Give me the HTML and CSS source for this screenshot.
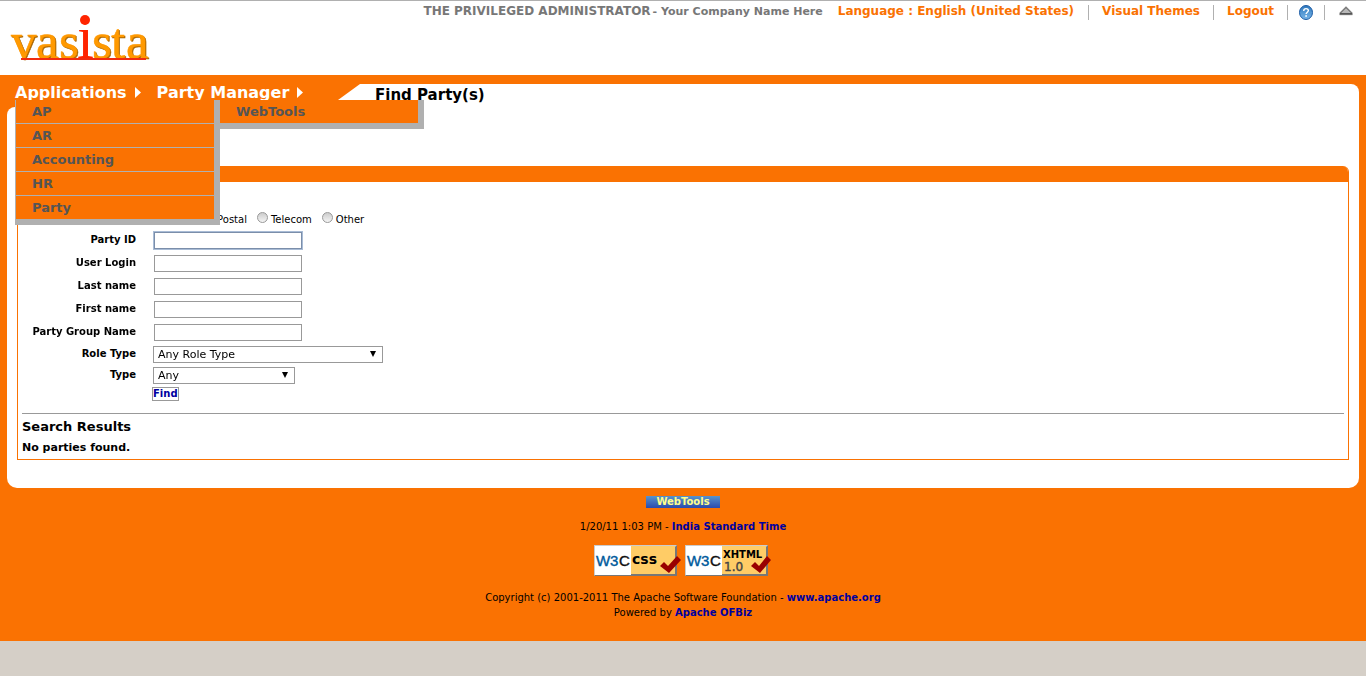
FILE: index.html
```html
<!DOCTYPE html>
<html lang="en">
<head>
<meta charset="utf-8">
<title>Find Party(s)</title>
<link rel="stylesheet" href="styles.css">
</head>
<body>
<header class="header">
  <a class="logo" href="#" aria-label="vasista">
    <svg width="146" height="68" viewBox="0 -12 146 68">
      <g class="logo-face"><text x="1" y="45">v</text><text x="26" y="45">a</text><text x="49" y="45">s</text><text x="82" y="45">s</text><text x="101" y="45">t</text><text x="116" y="45">a</text></g>
      <text class="logo-i" x="67" y="45">i</text>
      <circle cx="75" cy="7" r="5" fill="#ff2400"/>
      <rect x="11" y="45" width="125" height="2" fill="#f02c10"/>
    </svg>
  </a>
  <ul class="prefs">
    <li class="user"><span class="user-name">THE PRIVILEGED ADMINISTRATOR</span><span class="company">- Your Company Name Here</span></li>
    <li class="language"><a href="#">Language : English (United States)</a></li>
    <li><a href="#">Visual Themes</a></li>
    <li><a href="#">Logout</a></li>
    <li class="tool"><a href="#" aria-label="Help"><svg width="14" height="15" viewBox="0 0 14 15">
      <defs><linearGradient id="help" x2="0" y2="1"><stop offset="0" stop-color="#2f78bd"/><stop offset="1" stop-color="#79b6e8"/></linearGradient></defs>
      <ellipse cx="7" cy="7.5" rx="6.5" ry="7" fill="url(#help)" stroke="#1d5ca5"/>
      <path d="M4.7 5.9C4.7 2.9 9.4 2.9 9.4 5.6C9.4 7.2 7.1 7.3 7.1 9.1" fill="none" stroke="#fff" stroke-width="1.4"/><rect x="6.3" y="10.2" width="1.6" height="1.6" fill="#fff"/></svg></a></li>
    <li class="collapse"><a href="#" aria-label="Collapse header"><svg width="14" height="15" viewBox="0 0 14 15">
      <path d="M7 1.5L13.5 8V10H.5V8Z" fill="#555" stroke="#bbb" stroke-width=".6"/><path d="M7 2.9L12 8H2Z" fill="#b8b8b8"/></svg></a></li>
  </ul>
</header>

<div class="frame">
  <div class="topbar">
    <nav class="nav">
      <a href="#">Applications <svg class="arrow" width="6" height="11" viewBox="0 0 6 11"><path d="M0 0L6 5.5L0 11Z" fill="#fff"/></svg></a>
      <a href="#">Party Manager <svg class="arrow" width="6" height="11" viewBox="0 0 6 11"><path d="M0 0L6 5.5L0 11Z" fill="#fff"/></svg></a>
      <div class="menus">
        <ul class="menu menu-apps">
          <li><a href="#">AP</a></li>
          <li><a href="#">AR</a></li>
          <li><a href="#">Accounting</a></li>
          <li><a href="#">HR</a></li>
          <li><a href="#">Party</a></li>
        </ul>
        <ul class="menu menu-tools">
          <li><a href="#">WebTools</a></li>
        </ul>
      </div>
    </nav>
    <h1 class="tab">Find Party(s)</h1>
  </div>

  <main class="content">
    <section class="screenlet">
      <div class="screenlet-bar"></div>
      <form class="search">
        <div class="row contact">
          <span class="label">Contact Information</span>
          <div class="radios">
            <label><input type="radio" name="info">None</label>
            <label><input type="radio" name="info">Postal</label>
            <label><input type="radio" name="info">Telecom</label>
            <label><input type="radio" name="info">Other</label>
          </div>
        </div>
        <div class="row"><label class="label" for="party">Party ID</label><input class="text" id="party" type="text" autofocus></div>
        <div class="row"><label class="label" for="login">User Login</label><input class="text" id="login" type="text"></div>
        <div class="row"><label class="label" for="last">Last name</label><input class="text" id="last" type="text"></div>
        <div class="row"><label class="label" for="first">First name</label><input class="text" id="first" type="text"></div>
        <div class="row"><label class="label" for="group">Party Group Name</label><input class="text" id="group" type="text"></div>
        <div class="row short"><label class="label" for="role">Role Type</label><span class="pick pick-role"><select id="role"><option>Any Role Type</option></select></span></div>
        <div class="row short"><label class="label" for="type">Type</label><span class="pick pick-type"><select id="type"><option>Any</option></select></span></div>
        <div class="row last"><span></span><button class="find" type="button">Find</button></div>
      </form>
      <div class="results">
        <h2>Search Results</h2>
        <h3>No parties found.</h3>
      </div>
    </section>
  </main>

  <footer class="footer">
    <a class="webtools" href="#">WebTools</a>
    <p class="time">1/20/11 1:03 PM - <a href="#">India Standard Time</a></p>
    <div class="badges">
      <a href="#" aria-label="Valid CSS"><svg width="88" height="31" viewBox="0 0 88 31">
        <rect width="83" height="31" fill="#777"/><path d="M0 0H83L81 2H2V29L0 31Z" fill="#ccc"/><rect x="1" y="1" width="36" height="29" fill="#fff"/><rect x="37" y="1" width="44" height="28" fill="#fc6"/>
        <text class="w3" x="2" y="21">W</text><text class="w3" x="16" y="21">3</text><text class="w3 c" x="25" y="21">C</text>
        <text class="badge-label" x="38" y="19">css</text>
        <path d="M66 21L70 17L74 21L83 11L87 15L75 28Z" fill="#900"/></svg></a>
      <a href="#" aria-label="Valid XHTML 1.0"><svg width="88" height="31" viewBox="0 0 88 31">
        <rect width="83" height="31" fill="#777"/><path d="M0 0H83L81 2H2V29L0 31Z" fill="#ccc"/><rect x="1" y="1" width="36" height="29" fill="#fff"/><rect x="37" y="1" width="44" height="28" fill="#fc6"/>
        <text class="w3" x="2" y="21">W</text><text class="w3" x="16" y="21">3</text><text class="w3 c" x="25" y="21">C</text>
        <text class="badge-xhtml" x="38" y="13">XHTML</text><text class="badge-num" x="39" y="26">1.0</text>
        <path d="M66 21L70 17L74 21L82 11L86 15L75 28Z" fill="#900"/></svg></a>
    </div>
    <p>Copyright (c) 2001-2011 The Apache Software Foundation - <a href="#">www.apache.org</a></p>
    <p>Powered by <a href="#">Apache OFBiz</a></p>
  </footer>
</div>
</body>
</html>
```
FILE: styles.css
```css
* { box-sizing: border-box; }
body {
  margin: 0;
  background: #d5cfc7;
  color: #000;
  font: 10px/15px "DejaVu Sans", Verdana, sans-serif;
}
ul, p, h1, h2, h3 { margin: 0; padding: 0; list-style: none; }
a { text-decoration: none; }
svg { display: block; }

.header {
  display: flex;
  justify-content: space-between;
  align-items: flex-start;
  height: 75px;
  background: #fff;
  border-top: 1px solid #b0b0b0;
}
.logo { padding-left: 10px; }
.logo text { font-family: "Liberation Serif", serif; font-size: 51px; }
.logo-face {
  fill: #ff9900;
  stroke: #ff9900;
  stroke-width: .5px;
  filter: drop-shadow(1px 1px 0 #a86400);
}
.logo .logo-i { fill: #ff2400; font-size: 61px; }

.prefs {
  display: flex;
  align-items: flex-start;
  padding: 4px 13px 0 0;
  font-size: 12px;
  font-weight: bold;
  line-height: 13px;
}
.prefs li { padding: 0 13px 2px; border-right: 1px solid #b0b0b0; }
.prefs a { color: #fa7202; }
.prefs .user { padding: 0; border: 0; color: #777; }
.prefs .language { padding: 0 14px 2px 15px; }
.company { padding-left: 2px; font-size: 11px; }
.prefs .tool { padding: 0 11px; }
.prefs .collapse { padding: 0 0 0 14px; border: 0; }

.frame { background: #fa7202; padding: 0 7px; }
.topbar { display: flex; height: 32px; padding-top: 9px; }
.nav {
  position: relative;
  z-index: 1;
  display: flex;
  gap: 16px;
  width: 331px;
  padding-left: 8px;
}
.nav > a {
  display: flex;
  gap: 8px;
  height: 16px;
  align-items: center;
  color: #fff;
  font-size: 16px;
  font-weight: bold;
  white-space: nowrap;
}
.menus {
  position: absolute;
  top: 16px;
  left: 8px;
  display: flex;
  align-items: flex-start;
}
.menu {
  width: 205px;
  background: #fa7202;
  border: solid #b0b0b0;
  border-width: 0 6px 6px 1px;
}
.menu-apps { position: relative; z-index: 1; }
.menu-tools { margin-left: -1px; }
.menu li + li { border-top: 1px solid #b0b0b0; }
.menu a {
  display: block;
  padding-left: 16px;
  color: #555;
  font-size: 13px;
  font-weight: bold;
  line-height: 23px;
}
.tab {
  flex: 1;
  padding-left: 37px;
  background: #fff;
  border-top-right-radius: 8px;
  clip-path: polygon(22px 0, 100% 0, 100% 100%, 0 100%, 0 16px);
  font-size: 15px;
  line-height: 22px;
}

.content {
  padding: 59px 10px 28px;
  background: #fff;
  border-radius: 8px 0 10px 10px;
}
.screenlet {
  border: 1px solid #fa7202;
  border-top: 0;
  border-top-right-radius: 6px;
  overflow: hidden;
}
.screenlet-bar { height: 16px; background: #fa7202; }
.search { padding: 28px 0 12px; }
.row {
  display: grid;
  grid-template-columns: 118px 1fr;
  column-gap: 17px;
  align-items: center;
  justify-items: start;
  height: 23px;
}
.row.contact { height: 19px; }
.row.short { height: 21px; }
.row.last { height: 15px; }
.label {
  justify-self: end;
  padding-bottom: 2px;
  font-weight: bold;
  white-space: nowrap;
}
.radios { display: flex; gap: 10px; }
.radios label { display: flex; align-items: center; gap: 3px; }
.radios input {
  appearance: none;
  width: 11px;
  height: 11px;
  margin: 0 0 4px;
  border: 1px solid #999;
  border-radius: 50%;
  background: linear-gradient(#ccc, #f4f4f4);
}
.text {
  width: 148px;
  height: 17px;
  margin-left: 1px;
  padding: 1px;
  border: 1px solid #999;
  font: inherit;
}
.text:focus { border-color: #7b8eaa; outline: 1px solid #a9bcd6; }
.pick { position: relative; }
.pick::after {
  content: "";
  position: absolute;
  top: 5px;
  right: 7px;
  border: solid transparent;
  border-width: 6px 3px 0;
  border-top-color: #000;
  pointer-events: none;
}
.pick-role { width: 230px; }
.pick-type { width: 142px; }
.pick select {
  display: block;
  appearance: none;
  width: 100%;
  height: 17px;
  padding: 0 4px;
  border: 1px solid #999;
  border-radius: 0;
  background: #fff;
  color: #000;
  font: 11px/15px "DejaVu Sans", sans-serif;
}
.find {
  height: 14px;
  margin-left: -1px;
  padding: 0;
  border: 1px solid #999;
  background: #fff;
  color: #00009f;
  font: bold 10px/12px "DejaVu Sans", sans-serif;
}
.results { margin: 0 4px; padding: 4px 0 3px; border-top: 1px solid #999; }
.results h2 { font-size: 13px; line-height: 18px; }
.results h3 { padding-top: 3px; font-size: 11px; line-height: 17px; }

.footer {
  display: flex;
  flex-direction: column;
  align-items: center;
  padding: 8px 0 21px;
}
.footer p a { color: #00009f; font-weight: bold; }
.webtools {
  padding: 0 10px;
  background: linear-gradient(#5793cc, #2b4bad);
  color: #ffff8c;
  font-weight: bold;
  line-height: 12px;
}
.footer .time { padding: 11px 0; }
.badges { display: flex; gap: 3px; padding-bottom: 14px; }
.w3 { font: 15px "Liberation Sans", sans-serif; fill: #005a9c; stroke: #005a9c; stroke-width: .4px; }
.w3.c { fill: #111; stroke: #111; }
.badge-label { font: bold 14px "DejaVu Sans", sans-serif; }
.badge-xhtml { font: bold 10px "DejaVu Sans", sans-serif; }
.badge-num { font: 12px "DejaVu Sans", sans-serif; fill: #444; stroke: #444; stroke-width: .4px; }
```
